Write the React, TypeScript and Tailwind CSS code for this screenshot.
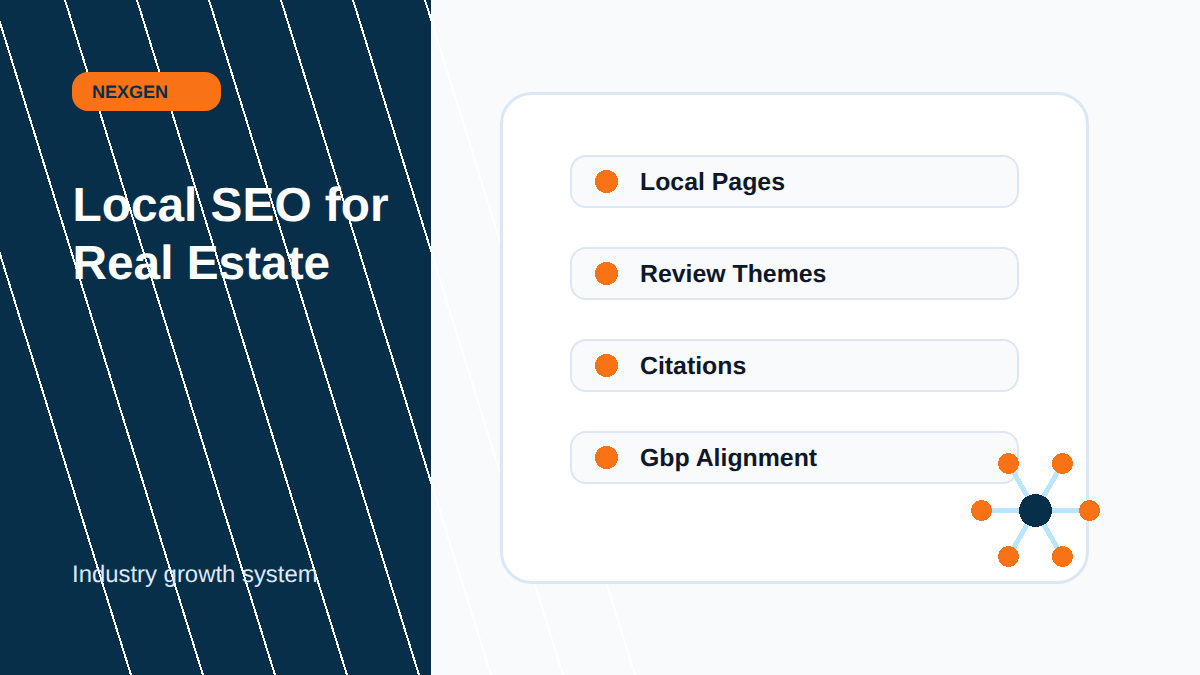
const lineStarts = [-79, -7, 65, 137, 209, 281, 353, 425]
const topics = ['Local Pages', 'Review Themes', 'Citations', 'Gbp Alignment']
const outerNodes = [
    [981.5, 510.5],
    [1089.5, 510.5],
    [1008.5, 463.5],
    [1062.5, 463.5],
    [1008.5, 556.5],
    [1062.5, 556.5],
]

const App = () => {
    return (
        <div className="relative w-[1200px] h-[675px] overflow-hidden flex bg-[#f8fafc] font-['Liberation_Sans',Arial,sans-serif] [text-rendering:geometricPrecision]">
            <div className="w-[431px] h-full bg-[#082f49]" />

            {/* diagonal lines run over both halves of the slide */}
            <svg className="absolute inset-0" width="1200" height="675" viewBox="0 0 1200 675" fill="none" shapeRendering="crispEdges">
                {lineStarts.map((x) => (
                    <line key={x} x1={x} y1="0" x2={x + 210} y2="675" stroke="#ffffff" strokeWidth="2" />
                ))}
            </svg>

            <div className="absolute inset-0 flex">
                <div className="w-[431px] h-full flex flex-col pl-[72px] pt-[72px] pb-[86px]">
                    <div className="w-[149px] h-[39px] rounded-[16px] bg-[#f97316] flex items-center pl-5 pt-0.5 text-[18px] font-bold text-[#082f49]">
                        NEXGEN
                    </div>
                    <h1 className="mt-[66px] ml-[0.5px] text-[47.8px] leading-[58px] font-bold text-white">
                        Local SEO for
                        <br />
                        Real Estate
                    </h1>
                    <p className="mt-auto text-[23.9px] leading-[28px] text-[#dbeafe]">Industry growth system</p>
                </div>

                <div className="flex-1 pl-[69px] pt-[92px]">
                    <div className="w-[589px] h-[492px] rounded-[32px] border-[3px] border-[#dbe7f3] bg-white pl-[67px] pt-[60px] flex flex-col gap-[39px]">
                        {topics.map((topic) => (
                            <div
                                key={topic}
                                className="w-[449px] h-[53px] rounded-[16px] border-2 border-[#dbe7f3] bg-[#f8fafc] flex items-center pl-[23px] gap-[22px]"
                            >
                                <svg className="shrink-0" width="23" height="23" viewBox="0 0 23 23" shapeRendering="crispEdges">
                                    <circle cx="11.5" cy="11.5" r="11.5" fill="#f97316" />
                                </svg>
                                <span className="pt-0.5 text-[24.85px] font-bold text-[#0f172a]">{topic}</span>
                            </div>
                        ))}
                    </div>
                </div>
            </div>

            <svg className="absolute inset-0" width="1200" height="675" viewBox="0 0 1200 675" fill="none" shapeRendering="crispEdges">
                {outerNodes.map(([x, y]) => (
                    <line key={`${x}-${y}`} x1="1035.5" y1="510.5" x2={x} y2={y} stroke="#bae6fd" strokeWidth="5" />
                ))}
                {outerNodes.map(([x, y]) => (
                    <circle key={`${x}-${y}`} cx={x} cy={y} r="10.5" fill="#f97316" />
                ))}
                <circle cx="1035.5" cy="510.5" r="16.5" fill="#082f49" />
            </svg>
        </div>
    )
}

export default App
